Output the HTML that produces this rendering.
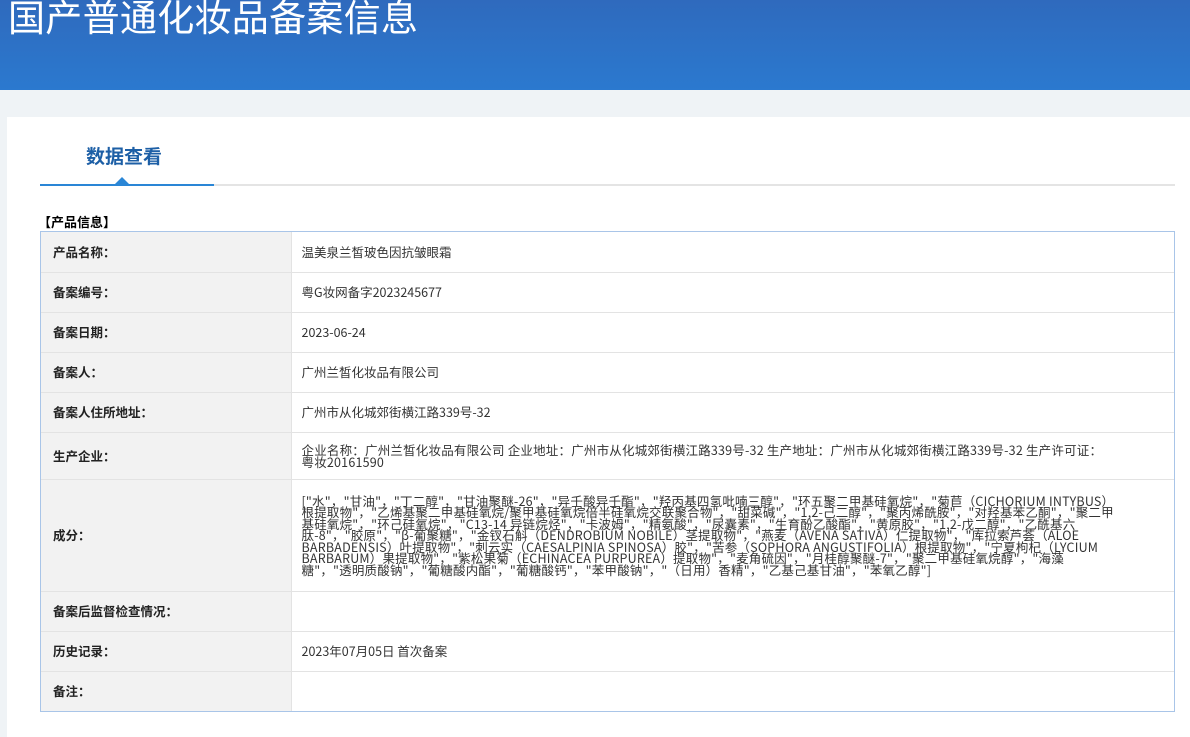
<!DOCTYPE html>
<html><head><meta charset="utf-8"><style>
*{margin:0;padding:0;box-sizing:border-box}
body{width:1190px;height:728px;overflow:hidden;background:#eff3f6;font-family:"Noto Sans CJK SC","Liberation Sans",sans-serif;position:relative}
.hdr{position:absolute;left:0;top:0;width:1190px;height:90px;background:linear-gradient(180deg,#2f6abd 0%,#2b79cf 100%);overflow:hidden}
.hdr h1{position:absolute;left:8px;top:-15px;font-size:37px;font-weight:normal;color:#fff;line-height:60px;white-space:nowrap;letter-spacing:0.3px}
.panel{position:absolute;left:7px;top:117px;width:1183px;height:620px;background:#fff}
.tab{position:absolute;left:79px;top:26px;font-size:19px;font-weight:bold;color:#1d5fa6;line-height:26px}
.line{position:absolute;left:33px;top:67px;width:1135px;height:2px;background:#e4e4e4}
.line i{position:absolute;left:0;top:0;width:174px;height:2px;background:#2a86d6}
.tri{position:absolute;left:108px;top:60px;width:0;height:0;border-left:7px solid transparent;border-right:7px solid transparent;border-bottom:7px solid #2a86d6}
.sec{position:absolute;left:31px;top:96px;font-size:13px;font-weight:bold;color:#000;line-height:18px}
.wrap{position:absolute;left:33px;top:114px;width:1135px;border:1px solid #a9c5e8}
table{width:100%;border-collapse:collapse;font-size:12.5px;color:#333}
td{border:1px solid #e3e3e3;padding:0 10px;vertical-align:middle;line-height:16px}
tr:first-child td{border-top:0}tr:last-child td{border-bottom:0}
td:first-child{border-left:0}td:last-child{border-right:0}
td.l{width:250px;background:#f2f2f2;font-weight:bold;color:#222;padding-left:12px}
tr{height:40px}
td.v{line-height:11.5px;padding-right:60px;letter-spacing:0.2px}
</style></head><body>
<div class="hdr"><h1>国产普通化妆品备案信息</h1></div>
<div class="panel">
<div class="tab">数据查看</div>
<div class="line"><i></i></div>
<div class="tri"></div>
<div class="sec">【产品信息】</div>
<div class="wrap">
<table>
<tr style="height:40px"><td class="l">产品名称：</td><td>温美泉兰皙玻色因抗皱眼霜</td></tr>
<tr><td class="l">备案编号：</td><td>粤G妆网备字2023245677</td></tr>
<tr><td class="l">备案日期：</td><td>2023-06-24</td></tr>
<tr><td class="l">备案人：</td><td>广州兰皙化妆品有限公司</td></tr>
<tr><td class="l">备案人住所地址：</td><td>广州市从化城郊街横江路339号-32</td></tr>
<tr style="height:47px"><td class="l">生产企业：</td><td class="v">企业名称：广州兰皙化妆品有限公司 企业地址：广州市从化城郊街横江路339号-32 生产地址：广州市从化城郊街横江路339号-32 生产许可证：粤妆20161590</td></tr>
<tr style="height:112px"><td class="l">成分：</td><td class="v">["水"，"甘油"，"丁二醇"，"甘油聚醚-26"，"异壬酸异壬酯"，"羟丙基四氢吡喃三醇"，"环五聚二甲基硅氧烷"，"菊苣（CICHORIUM INTYBUS）根提取物"，"乙烯基聚二甲基硅氧烷/聚甲基硅氧烷倍半硅氧烷交联聚合物"，"甜菜碱"，"1,2-己二醇"，"聚丙烯酰胺"，"对羟基苯乙酮"，"聚二甲基硅氧烷"，"环己硅氧烷"，"C13-14 异链烷烃"，"卡波姆"，"精氨酸"，"尿囊素"，"生育酚乙酸酯"，"黄原胶"，"1,2-戊二醇"，"乙酰基六肽-8"，"胶原"，"β-葡聚糖"，"金钗石斛（DENDROBIUM NOBILE）茎提取物"，"燕麦（AVENA SATIVA）仁提取物"，"库拉索芦荟（ALOE BARBADENSIS）叶提取物"，"刺云实（CAESALPINIA SPINOSA）胶"，"苦参（SOPHORA ANGUSTIFOLIA）根提取物"，"宁夏枸杞（LYCIUM BARBARUM）果提取物"，"紫松果菊（ECHINACEA PURPUREA）提取物"，"麦角硫因"，"月桂醇聚醚-7"，"聚二甲基硅氧烷醇"，"海藻糖"，"透明质酸钠"，"葡糖酸内酯"，"葡糖酸钙"，"苯甲酸钠"，"（日用）香精"，"乙基己基甘油"，"苯氧乙醇"]</td></tr>
<tr><td class="l">备案后监督检查情况：</td><td></td></tr>
<tr><td class="l">历史记录：</td><td>2023年07月05日 首次备案</td></tr>
<tr><td class="l">备注：</td><td></td></tr>
</table>
</div>
</div>
</body></html>
